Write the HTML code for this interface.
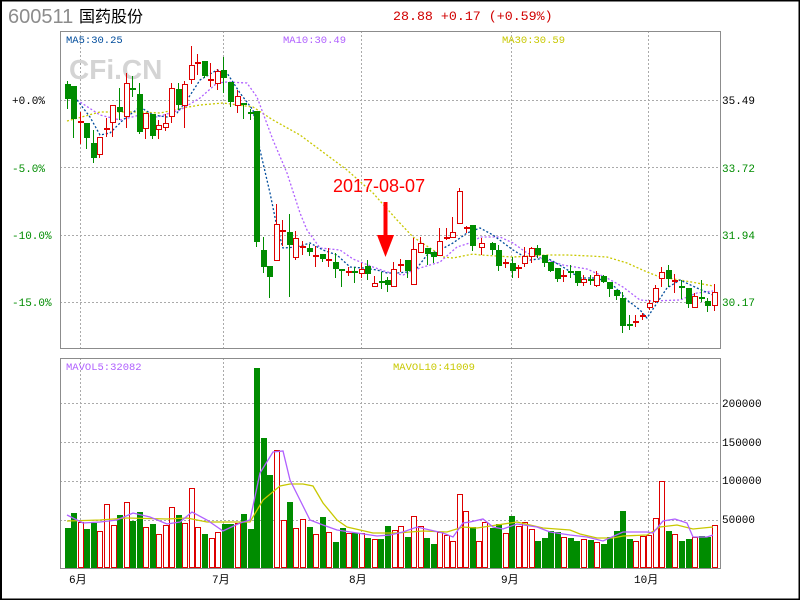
<!DOCTYPE html>
<html><head><meta charset="utf-8"><style>
html,body{margin:0;padding:0;background:#fff;}
svg{display:block;}
text{font-family:"Liberation Mono","Noto Sans CJK SC",monospace;}
rect{shape-rendering:crispEdges;}
</style></head><body>
<svg width="800" height="600" viewBox="0 0 800 600" xmlns="http://www.w3.org/2000/svg">
<rect x="0" y="0" width="800" height="600" fill="#fff"/>
<rect x="1" y="0.5" width="798" height="598.5" fill="none" stroke="#000" stroke-width="1.5"/>
<line x1="1" y1="0" x2="1" y2="600" stroke="#000" stroke-width="2"/>
<text x="8" y="23" font-size="20" fill="#8c8c8c" style="font-family:'Liberation Sans',sans-serif">600511</text>
<text x="79" y="22" font-size="16" fill="#000" style="font-family:'Liberation Sans','Noto Sans CJK SC',sans-serif">国药股份</text>
<text x="393" y="20" font-size="13.3" fill="#d00000">28.88 +0.17 (+0.59%)</text>

<g stroke="#aaa" stroke-dasharray="2,2" stroke-width="1">
<line x1="60" y1="100.5" x2="720" y2="100.5"/><line x1="60" y1="167.5" x2="720" y2="167.5"/>
<line x1="60" y1="235.5" x2="720" y2="235.5"/><line x1="60" y1="302.5" x2="720" y2="302.5"/>
<line x1="80.5" y1="31" x2="80.5" y2="349"/><line x1="223.5" y1="31" x2="223.5" y2="349"/>
<line x1="361.5" y1="31" x2="361.5" y2="349"/><line x1="511.5" y1="31" x2="511.5" y2="349"/>
<line x1="648.5" y1="31" x2="648.5" y2="349"/>
<line x1="60" y1="403.5" x2="720" y2="403.5"/><line x1="60" y1="442.5" x2="720" y2="442.5"/>
<line x1="60" y1="481.5" x2="720" y2="481.5"/><line x1="60" y1="520.5" x2="720" y2="520.5"/>
<line x1="80.5" y1="358" x2="80.5" y2="569"/><line x1="223.5" y1="358" x2="223.5" y2="569"/>
<line x1="361.5" y1="358" x2="361.5" y2="569"/><line x1="511.5" y1="358" x2="511.5" y2="569"/>
<line x1="648.5" y1="358" x2="648.5" y2="569"/>
</g>
<rect x="60.5" y="31.5" width="660" height="317" fill="none" stroke="#8c8c8c"/>
<rect x="60.5" y="358.5" width="660" height="210" fill="none" stroke="#8c8c8c"/>

<text x="69" y="79" font-size="28" fill="#d4d4d4" style="font-family:'Liberation Sans',sans-serif;font-weight:bold">CFi.CN</text>
<text x="66" y="43" font-size="10.5" fill="#004c9c">MA5:30.25</text>
<text x="283" y="43" font-size="10.5" fill="#b060ff">MA10:30.49</text>
<text x="502" y="43" font-size="10.5" fill="#c8c800">MA30:30.59</text>
<text x="66" y="370" font-size="10.5" fill="#b060ff">MAVOL5:32082</text>
<text x="393" y="370" font-size="10.5" fill="#c8c800">MAVOL10:41009</text>

<g font-size="11">
<text x="12" y="104" fill="#000">+0.0%</text>
<text x="12" y="172" fill="#008c00">-5.0%</text>
<text x="12" y="239" fill="#008c00">-10.0%</text>
<text x="12" y="306" fill="#008c00">-15.0%</text>
<text x="722" y="104" fill="#000">35.49</text>
<text x="722" y="172" fill="#008c00">33.72</text>
<text x="722" y="239" fill="#008c00">31.94</text>
<text x="722" y="306" fill="#008c00">30.17</text>
<text x="722" y="407" fill="#000">200000</text>
<text x="722" y="446" fill="#000">150000</text>
<text x="722" y="484" fill="#000">100000</text>
<text x="722" y="523" fill="#000">50000</text>
</g>
<g font-size="11" fill="#000" style="font-family:'Liberation Mono','Noto Sans CJK SC',monospace">
<text x="69" y="583">6月</text><text x="212" y="583">7月</text><text x="349" y="583">8月</text><text x="501" y="583">9月</text><text x="634" y="583">10月</text>
</g>

<polyline fill="none" stroke="#c8c800" stroke-width="1.3" stroke-dasharray="2,2" points="67,121 100,112 140,112 160,113 183,108 200,105 223,103 253,107 273,120 300,135 347,170 373,193 397,220 413,237 433,250 443,257 453,258 473,254 480,255 513,257 547,255 567,255 590,256 607,257 627,263 647,272 660,277 680,280 697,283 713,286"/>
<polyline fill="none" stroke="#b060ff" stroke-width="1.3" stroke-dasharray="2,2" points="77,100 100,115 120,120 140,115 157,117 180,110 200,98 217,83 227,82 247,83 257,97 273,140 287,173 300,213 307,230 320,248 340,250 353,259 373,267 387,272 403,275 420,268 440,262 457,247 473,242 480,237 500,237 513,243 527,253 547,260 563,265 587,269 607,278 623,287 640,300 653,301 680,300 697,293 713,291"/>
<polyline fill="none" stroke="#004c9c" stroke-width="1.3" stroke-dasharray="2,2" points="77,100 90,117 100,135 110,133 123,120 140,107 153,115 167,117 177,113 187,100 200,80 217,70 227,73 240,93 253,110 260,150 270,193 277,227 283,248 297,247 310,243 323,250 337,255 350,267 363,268 377,270 387,273 397,273 407,272 417,268 427,255 440,250 453,243 467,233 480,228 493,235 513,250 530,260 547,258 563,267 580,278 597,278 613,285 627,300 640,310 647,318 657,303 667,288 680,280 697,288 713,295"/>

<g id="candles"></g>
<g id="vols"></g>

<text x="333" y="192" font-size="18" fill="#ff0000" style="font-family:'Liberation Sans',sans-serif">2017-08-07</text>
<rect x="383.5" y="202" width="4" height="36" fill="#ff0000"/>
<polygon points="377,235 394,235 385.5,257" fill="#ff0000"/>
</svg>
<script>
var C=[
[66.7,84,99,81,109,0],[73,86,119,86,138,0],[80,121,123,112,144,1],[86,123,138,123,149,0],[93,143,158,130,163,0],[99,137,155,137,158,1],[106,128,130,118,137,1],[112,105,123,105,137,1],[119,107,112,88,120,0],[126,83,117,73,128,1],[132,88,90,76,97,0],[139,94,132,83,134,0],[145,113,129,113,139,1],[152,114,136,114,139,0],[158,125,130,120,139,1],[165,123,128,114,131,1],[171,88,117,83,123,1],[178,89,105,83,110,0],[184,84,106,81,128,1],[191,65,80,46,84,1],[197,62,64,54,75,1],[204,61,76,61,78,0],[210,79,81,63,87,1],[217,71,84,69,90,1],[223,70,78,57,93,0],[230,82,102,82,107,0],[237,96,106,90,113,1],[243,103,106,103,119,0],[250,112,114,109,120,0],[256,111,242,111,247,0],[263,250,267,237,273,0],[269,266,277,266,298,0],[276,224,261,204,261,1],[282,230,232,220,246,1],[289,232,245,214,297,0],[295,238,258,231,260,1],[302,246,248,241,255,1],[309,248,252,244,256,0],[315,255,257,246,267,1],[322,254,259,254,262,0],[328,259,261,248,267,1],[335,262,269,253,278,0],[341,269,271,269,287,0],[348,271,274,267,276,1],[354,271,273,267,283,0],[361,269,274,263,278,1],[367,266,274,260,280,0],[374,283,287,276,287,1],[381,281,283,272,289,0],[387,280,285,277,292,0],[393,269,287,262,287,1],[400,264,266,259,272,1],[407,260,271,260,278,0],[413,249,285,238,285,1],[420,243,253,237,253,1],[427,248,254,248,265,0],[433,252,257,252,263,0],[439,241,256,228,256,1],[446,237,239,228,240,1],[452,232,238,217,238,1],[459,191,224,188,224,1],[466,227,229,226,233,1],[472,225,246,225,251,0],[481,243,248,238,255,1],[492,243,250,242,255,0],[498,250,266,245,271,0],[505,262,264,259,268,1],[512,263,271,257,278,0],[518,267,269,265,278,1],[524,256,264,247,267,1],[531,248,257,247,263,1],[537,248,255,245,258,0],[544,255,263,255,267,0],[550,262,271,262,272,0],[557,268,279,268,282,0],[563,275,277,270,282,1],[570,271,273,265,278,0],[577,271,283,271,286,0],[583,279,283,275,286,1],[590,279,281,275,285,0],[596,275,286,271,287,1],[603,276,282,275,283,0],[609,282,289,282,297,0],[616,290,296,290,300,0],[622,298,326,292,333,0],[629,324,326,315,330,0],[635,321,323,315,327,1],[642,315,317,313,320,1],[649,303,308,300,310,1],[655,288,302,285,303,1],[661,272,279,267,287,1],[668,270,279,265,287,0],[674,280,282,274,293,1],[681,286,288,280,299,0],[688,288,304,288,308,0],[694,296,308,293,308,1],[701,297,299,280,302,0],[707,301,306,298,312,0],[714,292,306,284,311,1]];
var V=[[67,528,0],[73,513,0],[80,522,1],[86,529,0],[93,523,0],[99,531,1],[106,504,1],[113,525,1],[119,515,0],[126,502,1],[132,521,0],[139,512,0],[145,527,1],[152,524,0],[158,534,1],[165,525,1],[171,507,1],[178,515,0],[184,523,1],[191,488,1],[197,527,1],[204,534,0],[211,538,1],[217,532,1],[224,524,0],[230,524,0],[237,523,1],[243,514,0],[250,529,0],[256,368,0],[263,438,0],[269,475,0],[276,450,1],[283,520,1],[289,502,0],[295,528,1],[302,519,1],[309,527,0],[315,534,1],[322,517,0],[328,532,1],[335,542,0],[342,528,0],[348,533,1],[354,533,0],[361,533,1],[367,538,0],[374,539,1],[380,539,0],[387,526,0],[394,530,1],[400,526,1],[407,537,0],[413,516,1],[420,526,1],[426,538,0],[433,544,0],[439,532,1],[446,535,1],[452,541,1],[459,494,1],[465,511,1],[472,527,0],[478,541,1],[484,522,1],[492,528,0],[498,524,0],[505,533,1],[511,516,0],[518,526,1],[524,522,1],[531,529,1],[537,541,0],[544,538,0],[550,531,0],[557,532,0],[563,537,1],[570,538,0],[576,541,0],[583,539,1],[590,540,0],[596,542,1],[603,544,0],[609,537,0],[616,531,0],[622,511,0],[629,539,0],[635,541,1],[642,536,1],[648,535,1],[655,518,1],[661,481,1],[668,531,0],[674,534,1],[681,541,0],[688,539,0],[694,537,1],[701,536,0],[707,537,0],[714,525,1]];
var NS="http://www.w3.org/2000/svg";
function el(n,a,p){var e=document.createElementNS(NS,n);for(var k in a)e.setAttribute(k,a[k]);p.appendChild(e);return e;}
var g=document.getElementById('candles');
C.forEach(function(c){var x=Math.round(c[0]),col=c[5]?'#dd0000':'#008c00';
el('line',{x1:x+.5,y1:c[3],x2:x+.5,y2:c[4],stroke:col,'stroke-width':1,'shape-rendering':'crispEdges'},g);
var h=c[2]-c[1];
if(h<=3){el('rect',{x:x-2,y:c[1],width:6,height:2,fill:col},g);}
else if(c[5]){el('rect',{x:x-1.5,y:c[1]+.5,width:5,height:h-1,fill:'#fff',stroke:col,'stroke-width':1.3},g);}
else{el('rect',{x:x-2,y:c[1],width:6,height:h,fill:col},g);}
});
var v=document.getElementById('vols');
V.forEach(function(b){var x=Math.round(b[0]);
if(b[2])el('rect',{x:x-1.5,y:b[1]+.5,width:5,height:568-b[1]-1,fill:'#fff',stroke:'#dd0000','stroke-width':1.3},v);
else el('rect',{x:x-2,y:b[1],width:6,height:568-b[1],fill:'#008c00'},v);});
el('polyline',{fill:'none',stroke:'#c8c800','stroke-width':1.3,points:'67,521 100,520 127,518 167,519 187,518 207,522 233,522 250,522 263,500 280,486 290,484 303,484 313,486 323,503 337,520 347,527 360,530 373,533 397,533 423,531 447,532 463,527 477,528 497,525 517,522 543,528 570,530 580,534 597,538 613,538 623,536 647,535 660,527 677,525 693,529 713,527'},v);
el('polyline',{fill:'none',stroke:'#b060ff','stroke-width':1.3,points:'67,515 83,523 100,522 117,520 133,513 150,517 167,524 180,522 192,512 207,520 223,531 240,523 250,520 260,473 273,452 283,451 290,480 300,500 310,520 323,525 337,530 357,533 377,536 390,535 403,532 417,527 430,530 443,533 453,537 463,523 470,522 483,519 493,527 503,529 517,524 537,527 550,532 570,535 587,537 603,541 623,532 647,532 653,533 663,521 675,519 687,523 693,537 707,537 713,535'},v);
</script>
</body></html>
